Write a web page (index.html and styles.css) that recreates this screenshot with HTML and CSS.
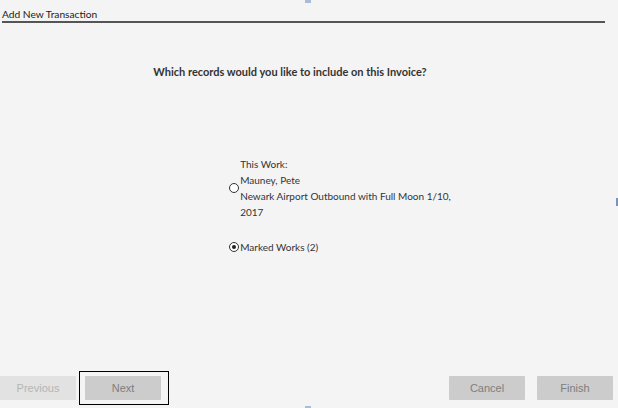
FILE: index.html
```html
<!DOCTYPE html>
<html lang="en">
<head>
  <meta charset="UTF-8" />
  <title>Add New Transaction</title>
  <link rel="stylesheet" href="styles.css">
</head>
<body>
  <div class="wizard">
    <!-- Header -->
    <div class="wizard-header">Add New Transaction</div>

    <!-- Body -->
    <div class="wizard-body">
      <div class="question">Which records would you like to include on this Invoice?</div>

      <div class="options">
        <label class="option">
          <span class="radio"></span>
          <span class="option-text">
            This Work:<br>
            Mauney, Pete<br>
            Newark Airport Outbound with Full Moon 1/10,<br>
            2017
          </span>
        </label>
        <label class="option">
          <span class="radio checked"></span>
          <span class="option-text">Marked Works (2)</span>
        </label>
      </div>
    </div>

    <!-- Footer buttons -->
    <div class="wizard-footer">
      <div class="left-buttons">
        <button class="btn disabled">Previous</button>
        <div class="focus-ring"><button class="btn">Next</button></div>
      </div>
      <div class="right-buttons">
        <button class="btn">Cancel</button>
        <button class="btn">Finish</button>
      </div>
    </div>

    <span class="marker marker-top"></span>
    <span class="marker marker-right"></span>
    <span class="marker marker-bottom"></span>
  </div>
</body>
</html>
```

FILE: styles.css
```css
/* Reset */
* {
  margin: 0;
  padding: 0;
  box-sizing: border-box;
}

body {
  background-color: #f4f4f4;
  color: #333333;
  font-family: 'Lato', 'Liberation Sans', sans-serif;
  font-size: 10px;
}

/* Main wizard */
.wizard {
  position: relative;
  height: 408px;
  display: flex;
  flex-direction: column;
}

.wizard-header {
  margin: 0 13px 0 2px;
  padding-top: 8px;
  height: 23px;
  line-height: 12px;
  font-size: 10.2px;
  border-bottom: 2px solid #555555;
  color: #222222;
}

.wizard-body {
  flex: 1;
  display: flex;
  flex-direction: column;
  align-items: center;
}

.question {
  margin-top: 42px;
  margin-right: 38px;
  font-size: 11px;
  font-weight: 700;
  color: #333333;
  line-height: 14px;
}

/* Options */
.options {
  margin-top: 77px;
  margin-left: 62px;
  display: flex;
  flex-direction: column;
  gap: 19px;
  line-height: 16px;
}

.option {
  display: flex;
  align-items: center;
  gap: 1px;
}

.radio {
  width: 10px;
  height: 10px;
  border: 1px solid #333333;
  border-radius: 50%;
  background-color: #ffffff;
  position: relative;
  flex-shrink: 0;
}

.radio.checked::after {
  content: "";
  position: absolute;
  top: 2px;
  left: 2px;
  width: 4px;
  height: 4px;
  border-radius: 50%;
  background-color: #222222;
}

/* Footer */
.wizard-footer {
  display: flex;
  justify-content: space-between;
  align-items: center;
  padding: 0 5px 3px 0;
}

.left-buttons,
.right-buttons {
  display: flex;
  align-items: center;
}

.left-buttons {
  gap: 3px;
}

.right-buttons {
  gap: 12px;
}

.btn {
  width: 76px;
  height: 24px;
  border: none;
  border-radius: 1px;
  background-color: #cccccc;
  color: #7e7e7e;
  font-family: 'Liberation Sans', sans-serif;
  font-size: 11px;
}

.btn.disabled {
  background-color: #e2e2e2;
  color: #b5b5b5;
}

.focus-ring {
  border: 1px solid #000000;
  padding: 4px 7px 4px 5px;
}

/* Stray markers from surrounding frame */
.marker {
  position: absolute;
  width: 6px;
  height: 3px;
  background-color: #a9bcd6;
}

.marker-top {
  top: 0;
  left: 305px;
}

.marker-right {
  top: 198px;
  left: 616px;
  width: 2px;
  height: 8px;
  background-color: #7a93b8;
}

.marker-bottom {
  top: 406px;
  left: 305px;
  height: 2px;
}
```
